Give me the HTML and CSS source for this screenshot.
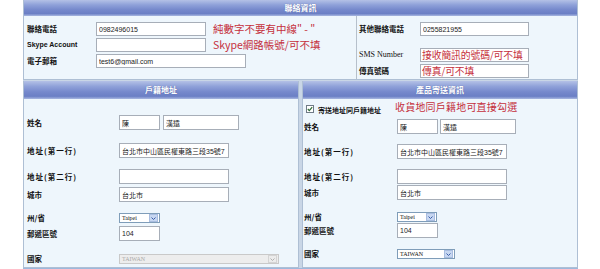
FILE: index.html
```html
<!DOCTYPE html>
<html lang="zh-Hant">
<head>
  <meta charset="UTF-8">
  <meta name="viewport" content="width=device-width, initial-scale=1.0">
  <title>聯絡資訊</title>
  <link rel="stylesheet" href="styles.css">
</head>
<body>
  <div class="page">
    <section class="box">
      <div class="bar">聯絡資訊</div>
      <div class="contact-body">
        <div class="contact-main">
          <div class="crow">
            <label>聯絡電話</label>
            <input class="in w-phone" type="text" value="0982496015">
            <span class="note">純數字不要有中線" - "</span>
          </div>
          <div class="crow">
            <label class="en">Skype Account</label>
            <input class="in w-phone" type="text" value="">
            <span class="note">Skype網路帳號/可不填</span>
          </div>
          <div class="crow">
            <label>電子郵箱</label>
            <input class="in w-mail" type="text" value="test6@gmail.com">
          </div>
        </div>
        <div class="contact-side">
          <div class="srow">
            <label>其他聯絡電話</label>
            <input class="in w-side" type="text" value="0255821955">
          </div>
          <div class="srow srow-sms">
            <label class="serif">SMS Number</label>
            <input class="in w-side hint" type="text" value="接收簡訊的號碼/可不填">
          </div>
          <div class="srow">
            <label>傳真號碼</label>
            <input class="in w-side hint" type="text" value="傳真/可不填">
          </div>
        </div>
      </div>
    </section>

    <div class="cols">
      <section class="box">
        <div class="bar bar-tall">戶籍地址</div>
        <div class="form form-home">
          <div class="frow">
            <label>姓名</label>
            <input class="in w-s" type="text" value="陳">
            <input class="in w-n gap3" type="text" value="漢遠">
          </div>
          <div class="frow">
            <label class="paren">地址(第一行)</label>
            <input class="in w-m" type="text" value="台北市中山區民權東路三段35號7">
          </div>
          <div class="frow">
            <label class="paren">地址(第二行)</label>
            <input class="in w-m" type="text" value="">
          </div>
          <div class="frow">
            <label>城市</label>
            <input class="in w-m" type="text" value="台北市">
          </div>
          <div class="frow">
            <label>州/省</label>
            <div class="sel w-s">
              <span class="sel-text">Taipei</span>
              <span class="sel-arrow"><svg width="5" height="3" viewBox="0 0 5 3"><path d="M0.5 0.5 L2.5 2.5 L4.5 0.5" fill="none" stroke="#3a5da8" stroke-width="1"/></svg></span>
            </div>
          </div>
          <div class="frow">
            <label>郵遞區號</label>
            <input class="in w-s" type="text" value="104">
          </div>
          <div class="frow">
            <label>國家</label>
            <div class="sel sel-off w-country">
              <span class="sel-text">TAIWAN</span>
              <span class="sel-arrow"><svg width="5" height="3" viewBox="0 0 5 3"><path d="M0.5 0.5 L2.5 2.5 L4.5 0.5" fill="none" stroke="#b0b0b0" stroke-width="1"/></svg></span>
            </div>
          </div>
        </div>
      </section>

      <section class="box">
        <div class="bar bar-tall">產品寄送資訊</div>
        <div class="form form-ship">
          <div class="same">
            <svg class="check" width="8" height="8" viewBox="0 0 8 8">
              <rect x="0.5" y="0.5" width="7" height="7" fill="#fff" stroke="#6f7a86"/>
              <path d="M1.8 4 L3.3 5.6 L6.2 2.2" fill="none" stroke="#2d6b33" stroke-width="1.2"/>
            </svg>
            <span class="same-label">寄送地址同戶籍地址</span>
            <span class="note note-same">收貨地同戶籍地可直接勾選</span>
          </div>
          <div class="frow">
            <label>姓名</label>
            <input class="in w-s" type="text" value="陳">
            <input class="in w-n gap2" type="text" value="漢遠">
          </div>
          <div class="frow">
            <label class="paren">地址(第一行)</label>
            <input class="in w-m" type="text" value="台北市中山區民權東路三段35號7">
          </div>
          <div class="frow">
            <label class="paren">地址(第二行)</label>
            <input class="in w-m" type="text" value="">
          </div>
          <div class="frow">
            <label>城市</label>
            <input class="in w-m" type="text" value="台北市">
          </div>
          <div class="frow">
            <label>州/省</label>
            <div class="sel w-sel">
              <span class="sel-text">Taipei</span>
              <span class="sel-arrow"><svg width="5" height="3" viewBox="0 0 5 3"><path d="M0.5 0.5 L2.5 2.5 L4.5 0.5" fill="none" stroke="#3a5da8" stroke-width="1"/></svg></span>
            </div>
          </div>
          <div class="frow">
            <label>郵遞區號</label>
            <input class="in w-s" type="text" value="104">
          </div>
          <div class="frow">
            <label>國家</label>
            <div class="sel w-ship">
              <span class="sel-text">TAIWAN</span>
              <span class="sel-arrow"><svg width="5" height="3" viewBox="0 0 5 3"><path d="M0.5 0.5 L2.5 2.5 L4.5 0.5" fill="none" stroke="#3a5da8" stroke-width="1"/></svg></span>
            </div>
          </div>
        </div>
      </section>
    </div>
    <div class="foot"></div>
  </div>
</body>
</html>
```

FILE: styles.css
```css
* {
  box-sizing: border-box;
  margin: 0;
  padding: 0;
}

body {
  font-family: "Noto Sans CJK TC", "Liberation Sans", sans-serif;
  background-color: #fff;
  color: #111;
}

.page {
  width: 555px;
  margin-left: 23px;
  background-color: #c9d6e6;
}

.box {
  background-color: #eef6fc;
  border: 1px solid #aebfd4;
  border-top: 0;
}

.bar {
  height: 16px;
  line-height: 16px;
  text-align: center;
  font-size: 8px;
  font-weight: 700;
  color: #fff;
  text-shadow: 0 0 1px #4b5c9c;
  background: linear-gradient(to bottom, #b4c1e6 0%, #8fa1d9 30%, #7689cc 60%, #6b7fc5 85%, #a9b8e1 100%);
}

.bar-tall {
  height: 18px;
  line-height: 18px;
}

label {
  font-size: 7.5px;
  font-weight: 700;
  line-height: 10px;
  white-space: nowrap;
}

label.paren {
  letter-spacing: 1px;
}

label.en {
  font-family: "Liberation Sans", sans-serif;
  font-size: 7px;
}

label.serif {
  font-family: "Liberation Serif", serif;
  font-size: 8px;
  font-weight: 400;
}

.in {
  height: 15px;
  padding: 0 2px;
  border: 1px solid #a7aeb8;
  background-color: #fff;
  font-family: "Liberation Sans", "Noto Sans CJK TC", sans-serif;
  font-size: 7px;
  color: #222;
  outline: none;
}

.note {
  font-size: 10.5px;
  line-height: 14px;
  color: #c5303c;
  white-space: nowrap;
}

/* contact block */

.contact-body {
  display: flex;
  height: 63px;
}

.contact-main {
  width: 333px;
  padding: 6px 0 0 3px;
  border-right: 1px solid #b6c0cb;
}

.contact-side {
  flex: 1;
  padding: 6px 0 0 2px;
}

.crow,
.srow {
  display: flex;
  align-items: center;
  height: 14px;
}

.crow + .crow {
  margin-top: 2px;
}

.crow label {
  width: 69px;
}

.crow .in {
  height: 14px;
}

.crow .note {
  margin-left: 7px;
}

.srow label {
  width: 61px;
}

.srow .in {
  height: 14px;
}

.srow + .srow {
  margin-top: 2px;
}

.srow-sms {
  margin-top: 12px !important;
}

.in.hint {
  font-family: "Noto Sans CJK TC", sans-serif;
  font-size: 9.8px;
  letter-spacing: -0.1px;
  color: #c5303c;
  padding: 0 1px;
}

.w-phone { width: 110px; }
.w-mail { width: 150px; }
.w-side { width: 109px; }

/* address blocks */

.cols {
  display: grid;
  grid-template-columns: 276px 276px;
  gap: 3px;
  margin-top: 1px;
}

.form {
  display: grid;
  height: 168px;
}

.form-home {
  padding: 16px 0 0 3px;
  grid-template-rows: 28px 26px 18px 26px 13px 28px 13px;
}

.form-ship {
  padding: 3px 0 0 1px;
  grid-template-rows: 17px 25px 25px 16px 27px 11px 26px 18px;
}

.frow {
  display: flex;
  align-items: center;
  align-self: start;
}

.form-home .frow label {
  width: 92px;
}

.form-ship .frow label {
  width: 93px;
}

.w-s { width: 41px; }
.w-n { width: 76px; }
.w-m { width: 110px; }
.w-sel { width: 40px; }
.w-country { width: 160px; }
.w-ship { width: 58px; }

.gap3 { margin-left: 3px; }
.gap2 { margin-left: 2px; }

.same {
  display: flex;
  align-items: flex-end;
  align-self: start;
  height: 13px;
  padding-left: 2px;
}

.check {
  margin-bottom: 2px;
}

.same-label {
  margin-left: 4px;
  font-size: 7px;
  font-weight: 700;
  line-height: 9px;
}

.note-same {
  margin-left: 14px;
  font-size: 10px;
  letter-spacing: 0.2px;
  line-height: 13px;
  margin-bottom: 2px;
}

.sel {
  display: flex;
  align-items: center;
  height: 10px;
  border: 1px solid #7f9db9;
  background-color: #fff;
}

.sel-text {
  flex: 1;
  padding-left: 2px;
  font-family: "Liberation Serif", serif;
  font-size: 6px;
  line-height: 8px;
  color: #111;
}

.sel-arrow {
  display: flex;
  align-items: center;
  justify-content: center;
  width: 9px;
  height: 8px;
  margin-right: 1px;
  background-color: #c7d7f1;
  border: 1px solid #a9bde0;
}

.sel-off {
  border-color: #c9c9c9;
  background-color: #ededed;
}

.sel-off .sel-text {
  color: #a8a8a8;
}

.sel-off .sel-arrow {
  background-color: #ececec;
  border-color: #d4d4d4;
}

.foot {
  height: 3px;
  background-color: #9db8dc;
}
```
